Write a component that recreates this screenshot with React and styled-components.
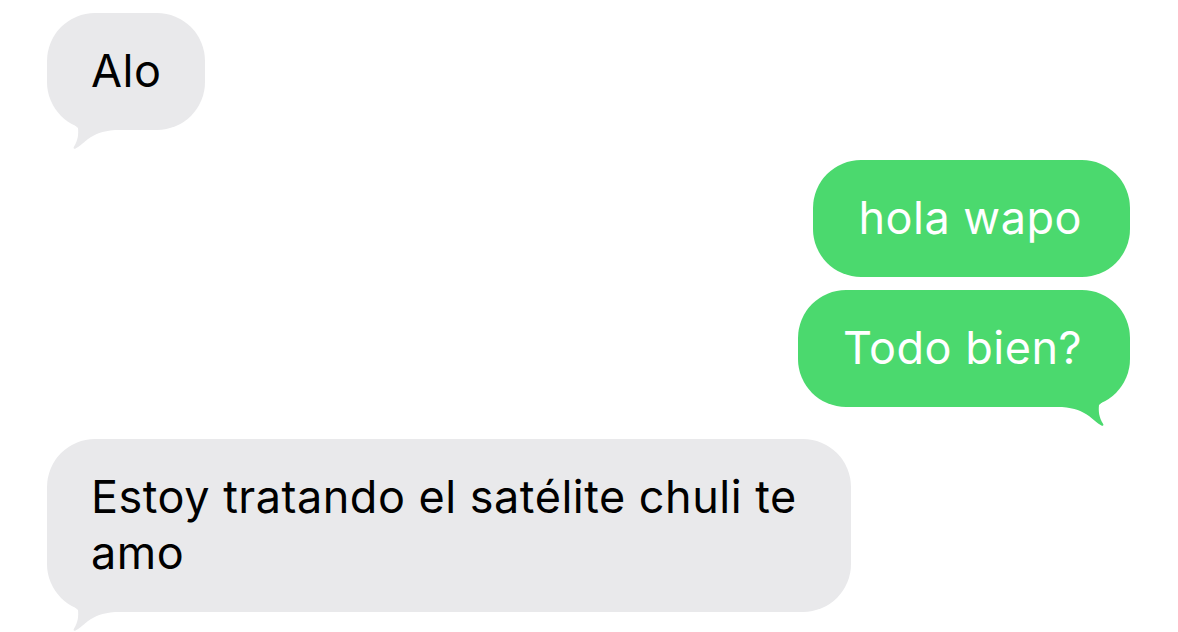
import React from "react";
import styled, { createGlobalStyle } from "styled-components";

const Global = createGlobalStyle`
  html, body { margin: 0; padding: 0; background: #ffffff; }
  body { font-family: "Inter", "Noto Sans", sans-serif; -webkit-font-smoothing: antialiased; }
`;

const Thread = styled.div`
  display: flex;
  flex-direction: column;
  padding: 13px 48px 0 47px;
  width: 1178px;
  height: 632px;
  box-sizing: border-box;
  overflow: hidden;
`;

const Bubble = styled.div`
  position: relative;
  box-sizing: border-box;
  max-width: 804px;
  align-self: ${(p) => (p.$out ? "flex-end" : "flex-start")};
  margin-top: ${(p) => p.$gap || 0}px;
  padding: 30px ${(p) => (p.$out ? 48 : 44)}px 31px ${(p) => (p.$out ? 45 : 44)}px;
  border-radius: 48px;
  background: ${(p) => (p.$out ? "#4bd96e" : "#e9e9eb")};
  color: ${(p) => (p.$out ? "#ffffff" : "#000000")};
  font-size: 45px;
  line-height: 56px;
  letter-spacing: 0.5px;
`;

const TailSvg = styled.svg`
  position: absolute;
  bottom: -22px;
  width: 70px;
  height: 34px;
  ${(p) => (p.$out ? "right: 0; transform: scaleX(-1);" : "left: 0;")}
  fill: ${(p) => (p.$out ? "#4bd96e" : "#e9e9eb")};
`;

function Tail({ out }) {
  return (
    <TailSvg $out={out} viewBox="0 -12 70 34" aria-hidden="true">
      <path d="M20 -12 L31 -2 C31.6 4 31.2 10 26.8 17 C26 18.6 27.4 19.2 28.6 18.6 C33 16.4 37 12 41 9 C48 4 55 1 68 0 L68 -12 Z" />
    </TailSvg>
  );
}

export default function App() {
  return (
    <>
      <Global />
      <Thread>
        <Bubble>
          Alo
          <Tail />
        </Bubble>
        <Bubble $out $gap={30}>hola wapo</Bubble>
        <Bubble $out $gap={13}>
          Todo bien?
          <Tail out />
        </Bubble>
        <Bubble $gap={32}>
          Estoy tratando el satélite chuli te amo
          <Tail />
        </Bubble>
      </Thread>
    </>
  );
}
